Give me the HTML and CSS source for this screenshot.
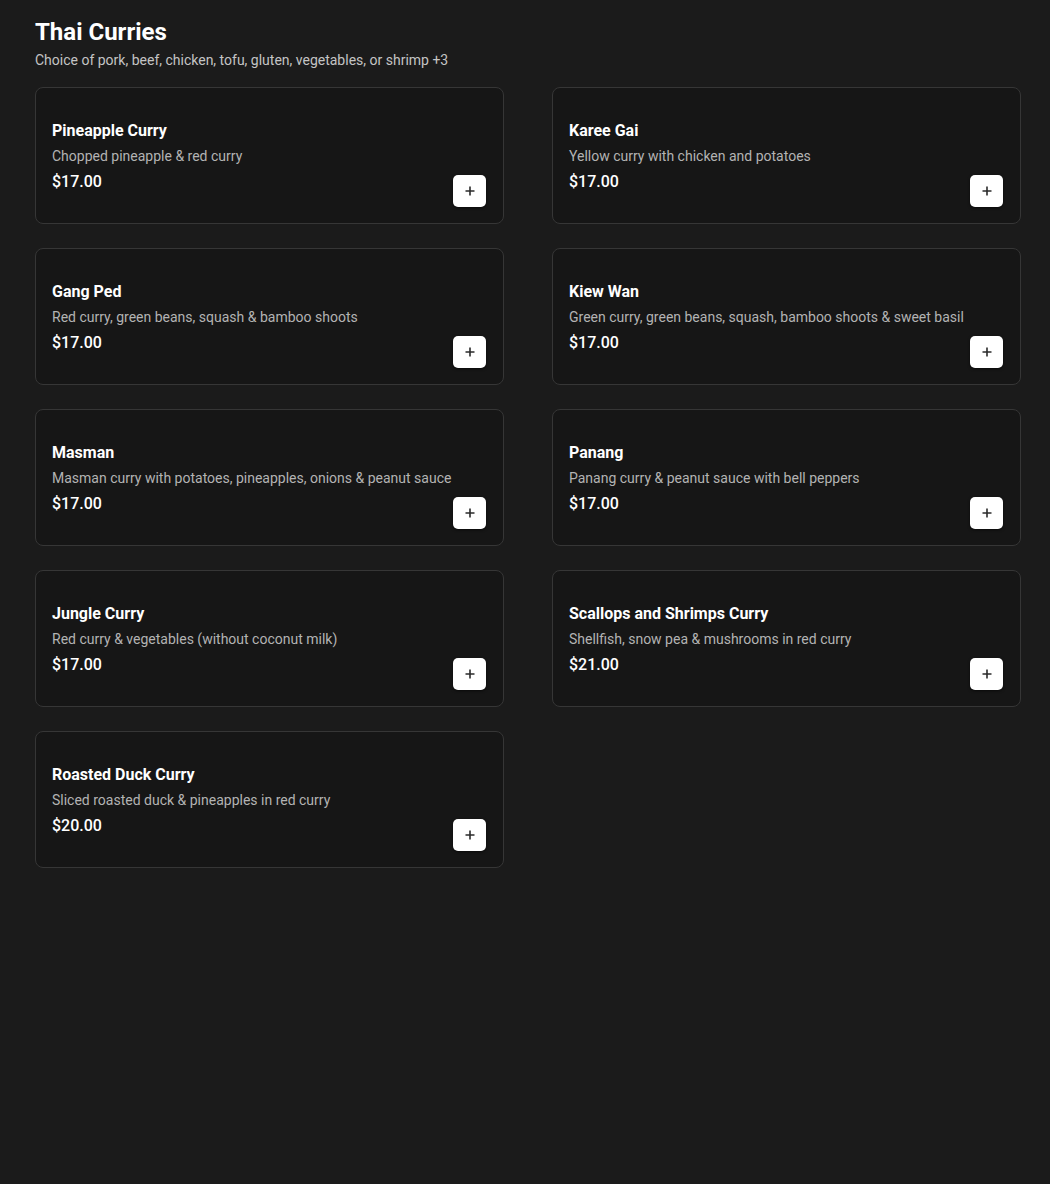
FILE: index.html
```html
<!DOCTYPE html>
<html lang="en">
<head>
<meta charset="utf-8">
<title>Thai Curries</title>
<link rel="stylesheet" href="styles.css">
</head>
<body>
<main class="page">
  <header class="section-head">
    <h1 class="section-title">Thai Curries</h1>
    <p class="section-sub">Choice of pork, beef, chicken, tofu, gluten, vegetables, or shrimp +3</p>
  </header>
  <div class="grid">
    <div class="card"><div class="info"><div class="name">Pineapple Curry</div><div class="desc">Chopped pineapple &amp; red curry</div><div class="price">$17.00</div></div><button class="add"><svg viewBox="0 0 12 12" width="12" height="12"><path d="M6 1.5v9M1.5 6h9" stroke="#2b2b2b" stroke-width="1.6" fill="none"/></svg></button></div>
    <div class="card"><div class="info"><div class="name">Karee Gai</div><div class="desc">Yellow curry with chicken and potatoes</div><div class="price">$17.00</div></div><button class="add"><svg viewBox="0 0 12 12" width="12" height="12"><path d="M6 1.5v9M1.5 6h9" stroke="#2b2b2b" stroke-width="1.6" fill="none"/></svg></button></div>
    <div class="card"><div class="info"><div class="name">Gang Ped</div><div class="desc">Red curry, green beans, squash &amp; bamboo shoots</div><div class="price">$17.00</div></div><button class="add"><svg viewBox="0 0 12 12" width="12" height="12"><path d="M6 1.5v9M1.5 6h9" stroke="#2b2b2b" stroke-width="1.6" fill="none"/></svg></button></div>
    <div class="card"><div class="info"><div class="name">Kiew Wan</div><div class="desc">Green curry, green beans, squash, bamboo shoots &amp; sweet basil</div><div class="price">$17.00</div></div><button class="add"><svg viewBox="0 0 12 12" width="12" height="12"><path d="M6 1.5v9M1.5 6h9" stroke="#2b2b2b" stroke-width="1.6" fill="none"/></svg></button></div>
    <div class="card"><div class="info"><div class="name">Masman</div><div class="desc">Masman curry with potatoes, pineapples, onions &amp; peanut sauce</div><div class="price">$17.00</div></div><button class="add"><svg viewBox="0 0 12 12" width="12" height="12"><path d="M6 1.5v9M1.5 6h9" stroke="#2b2b2b" stroke-width="1.6" fill="none"/></svg></button></div>
    <div class="card"><div class="info"><div class="name">Panang</div><div class="desc">Panang curry &amp; peanut sauce with bell peppers</div><div class="price">$17.00</div></div><button class="add"><svg viewBox="0 0 12 12" width="12" height="12"><path d="M6 1.5v9M1.5 6h9" stroke="#2b2b2b" stroke-width="1.6" fill="none"/></svg></button></div>
    <div class="card"><div class="info"><div class="name">Jungle Curry</div><div class="desc">Red curry &amp; vegetables (without coconut milk)</div><div class="price">$17.00</div></div><button class="add"><svg viewBox="0 0 12 12" width="12" height="12"><path d="M6 1.5v9M1.5 6h9" stroke="#2b2b2b" stroke-width="1.6" fill="none"/></svg></button></div>
    <div class="card"><div class="info"><div class="name">Scallops and Shrimps Curry</div><div class="desc">Shellfish, snow pea &amp; mushrooms in red curry</div><div class="price">$21.00</div></div><button class="add"><svg viewBox="0 0 12 12" width="12" height="12"><path d="M6 1.5v9M1.5 6h9" stroke="#2b2b2b" stroke-width="1.6" fill="none"/></svg></button></div>
    <div class="card"><div class="info"><div class="name">Roasted Duck Curry</div><div class="desc">Sliced roasted duck &amp; pineapples in red curry</div><div class="price">$20.00</div></div><button class="add"><svg viewBox="0 0 12 12" width="12" height="12"><path d="M6 1.5v9M1.5 6h9" stroke="#2b2b2b" stroke-width="1.6" fill="none"/></svg></button></div>
  </div>
</main>
</body>
</html>
```
FILE: styles.css
```css
html, body {
  margin: 0;
  padding: 0;
  background: #1b1b1b;
  min-height: 100%;
}
body {
  font-family: Roboto, "Liberation Sans", Arial, sans-serif;
  color: #fff;
  min-height: 1184px;
}
.page {
  padding: 16px 29px 0 35px;
}
.section-head {
  margin-bottom: 17px;
}
.section-title {
  margin: 0;
  font-size: 24px;
  line-height: 32px;
  font-weight: 700;
  color: #fff;
}
.section-sub {
  margin: 2px 0 0;
  font-size: 14px;
  line-height: 20px;
  color: #c4c4c4;
}
.grid {
  display: grid;
  grid-template-columns: 469px 469px;
  column-gap: 48px;
  row-gap: 24px;
}
.card {
  box-sizing: border-box;
  min-height: 137px;
  background: #161616;
  border: 1px solid #363636;
  border-radius: 8px;
  padding: 16px 17px 16px 16px;
  display: flex;
  align-items: center;
  justify-content: space-between;
}
.info {
  display: flex;
  flex-direction: column;
  padding-top: 2px;
}
.name {
  font-size: 16px;
  line-height: 24px;
  font-weight: 700;
  color: #fff;
}
.desc {
  margin-top: 3px;
  font-size: 14px;
  line-height: 20px;
  color: #b3b3b3;
}
.price {
  margin-top: 4px;
  font-size: 16px;
  line-height: 24px;
  font-weight: 500;
  color: #fff;
}
.add {
  align-self: flex-end;
  flex: none;
  width: 33px;
  height: 32px;
  padding: 0;
  border: none;
  border-radius: 5px;
  background: #fff;
  box-shadow: 0 1px 3px rgba(0,0,0,0.6);
  display: flex;
  align-items: center;
  justify-content: center;
  cursor: pointer;
}
.add svg {
  display: block;
}
```
